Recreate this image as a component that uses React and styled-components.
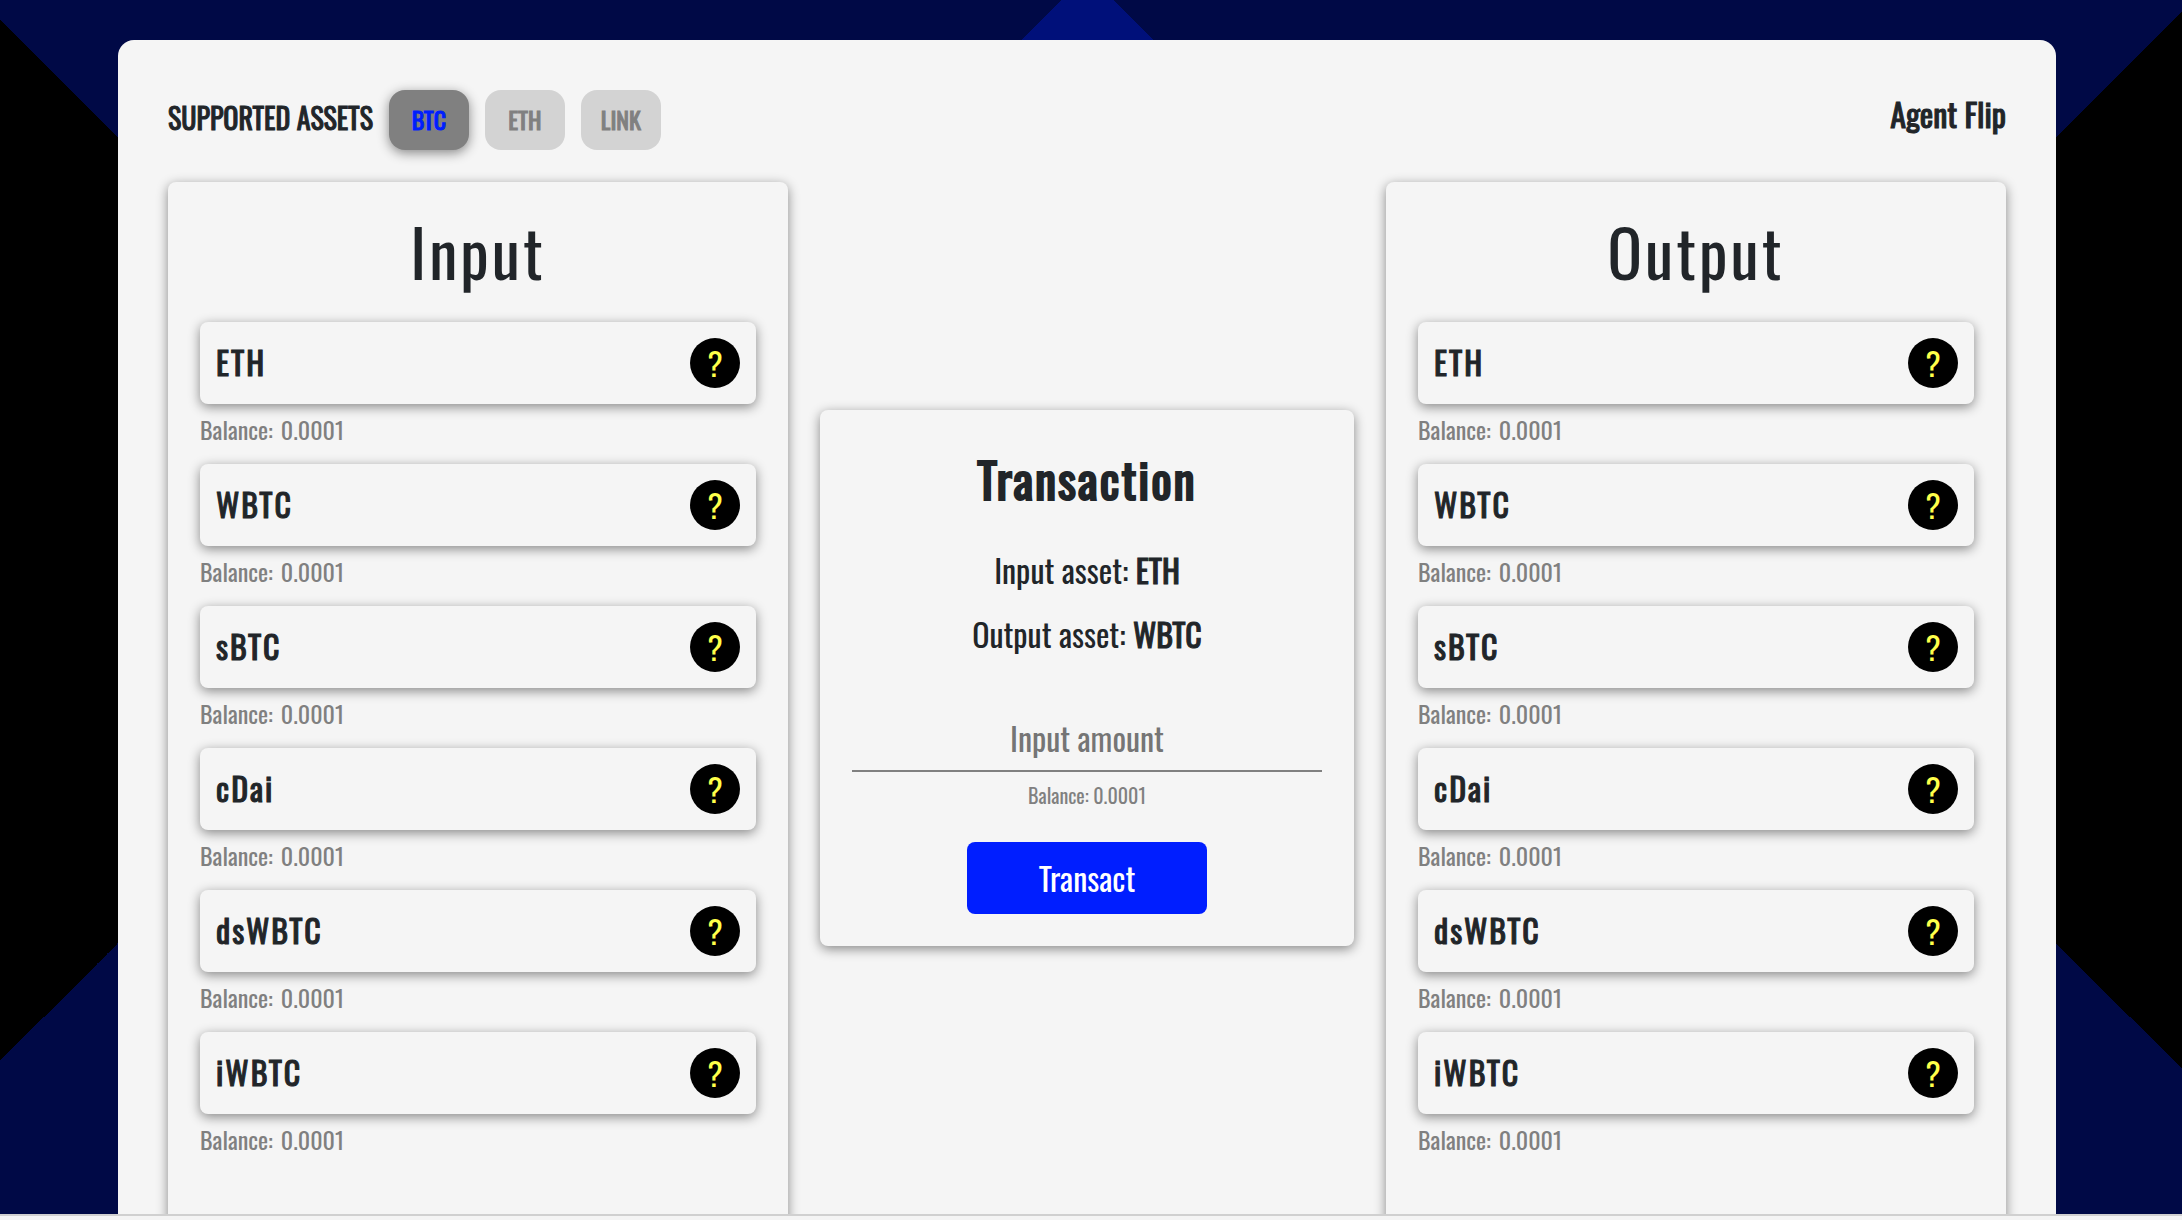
import React, { useState } from "react";
import styled, { createGlobalStyle, css } from "styled-components";

const GlobalStyle = createGlobalStyle`
  *, *::before, *::after { box-sizing: border-box; }
  body {
    margin: 0;
    font-family: Oswald, "Roboto Condensed", sans-serif;
    font-size: 32px;
    line-height: 48px;
    color: #212529;
    background: #f4f4f4;
    font-synthesis: none;
  }
  h1, h2, h3, p, ul { margin: 0; padding: 0; font-weight: 400; }
  button, input { font: inherit; }
`;

const heavy = css`
  font-weight: 400;
  -webkit-text-stroke: 1px currentColor;
`;

const raised = css`
  background: #f5f5f5;
  border-radius: 8px;
  box-shadow: 0 3px 12px rgba(0, 0, 0, 0.45);
`;

const Page = styled.div`
  display: flex;
  flex-direction: column;
  height: 100vh;
`;

const Backdrop = styled.main`
  flex: 1;
  min-height: 0;
  overflow: hidden;
  display: flex;
  padding: 40px 126px 0 118px;
  background:
    conic-gradient(from 225deg at calc(50% - 570px) 540px, #000 90deg, transparent 0),
    conic-gradient(from 45deg at calc(50% + 562px) 540px, #000 90deg, transparent 0),
    conic-gradient(from 135deg at calc(50% - 4px) -26px, #00107a 90deg, transparent 0) 0 0 / 100% 540px no-repeat,
    #000946;
`;

const Footer = styled.footer`
  height: 6px;
  border-top: 2px solid #d0d0d0;
  background: #f4f4f4;
`;

const Sheet = styled.section`
  flex: 1;
  display: flex;
  flex-direction: column;
  gap: 32px;
  height: max-content;
  min-height: 100%;
  padding: 50px 50px 0;
  background: #f5f5f5;
  border-radius: 16px 16px 0 0;
`;

const Header = styled.header`
  display: flex;
  justify-content: space-between;
  align-items: flex-start;
`;

const AssetFilter = styled.div`
  display: flex;
  align-items: baseline;
  gap: 16px;
`;

const FilterLabel = styled.h3`
  ${heavy}
  font-size: 28px;
`;

const Brand = styled.h1`
  ${heavy}
  font-size: 32px;
`;

const Chip = styled.button`
  ${heavy}
  width: 80px;
  height: 60px;
  padding: 0 0 2px;
  border: 0;
  border-radius: 16px;
  font-size: 24px;
  line-height: 36px;
  cursor: pointer;
  color: ${(p) => (p.$active ? "#001eff" : "#808080")};
  background: ${(p) => (p.$active ? "#808080" : "#d3d3d3")};
  box-shadow: ${(p) => (p.$active ? "0 3px 12px rgba(0, 0, 0, 0.45)" : "none")};
`;

const Columns = styled.div`
  flex: 1;
  display: grid;
  grid-template-columns: 620fr 534fr 620fr;
  gap: 32px;
`;

const Card = styled.section`
  ${raised}
  border-radius: 8px 8px 0 0;
  padding: 32px 32px 80px;
`;

const CardTitle = styled.h2`
  margin-bottom: 34px;
  font-size: 64px;
  line-height: 74px;
  letter-spacing: 3px;
  text-align: center;
`;

const TokenList = styled.ul`
  display: flex;
  flex-direction: column;
  gap: 18px;
  list-style: none;
`;

const Token = styled.li`
  display: flex;
  flex-direction: column;
  gap: 8px;
`;

const TokenRow = styled.div`
  ${raised}
  display: flex;
  justify-content: space-between;
  align-items: flex-start;
  padding: 16px;
`;

const TokenName = styled.span`
  ${heavy}
  letter-spacing: 2px;
`;

const Help = styled.button`
  width: 50px;
  height: 50px;
  padding: 0;
  border: 0;
  border-radius: 50%;
  line-height: 48px;
  color: #ffff4a;
  background: #000;
  cursor: pointer;
`;

const Balance = styled.p`
  display: flex;
  gap: 8px;
  font-size: 24px;
  line-height: 34px;
  color: #808080;
`;

const TransactionCard = styled.form`
  ${raised}
  align-self: start;
  display: flex;
  flex-direction: column;
  align-items: center;
  margin-top: 228px;
  padding: 32px;
`;

const TransactionTitle = styled.h2`
  ${heavy}
  -webkit-text-stroke-width: 2px;
  margin-bottom: 30px;
  font-size: 48px;
  line-height: 74px;
  letter-spacing: 2px;
`;

const Choice = styled.p`
  margin-bottom: 16px;
  b { ${heavy} }
`;

const Amount = styled.input`
  width: 100%;
  margin: 40px 0 8px;
  padding: 0 0 10px;
  border: 0;
  border-bottom: 2px solid #808080;
  border-radius: 0;
  background: none;
  line-height: 46px;
  height: 58px;
  text-align: center;
  color: #212529;
  outline: none;
  &::placeholder { color: #757575; opacity: 1; }
`;

const SmallBalance = styled.p`
  font-size: 20px;
  line-height: 30px;
  color: #808080;
`;

const Submit = styled.button`
  width: 240px;
  height: 72px;
  margin-top: 32px;
  padding: 0;
  border: 0;
  border-radius: 8px;
  color: #fff;
  background: #001eff;
  cursor: pointer;
`;

const FILTERS = ["BTC", "ETH", "LINK"];
const TOKENS = ["ETH", "WBTC", "sBTC", "cDai", "dsWBTC", "iWBTC"];
const BALANCE = "0.0001";

function TokenCard({ title }) {
  return (
    <Card>
      <CardTitle>{title}</CardTitle>
      <TokenList>
        {TOKENS.map((name) => (
          <Token key={name}>
            <TokenRow>
              <TokenName>{name}</TokenName>
              <Help type="button">?</Help>
            </TokenRow>
            <Balance>
              <span>Balance:</span>
              <span>{BALANCE}</span>
            </Balance>
          </Token>
        ))}
      </TokenList>
    </Card>
  );
}

export default function App() {
  const [filter, setFilter] = useState("BTC");
  const [amount, setAmount] = useState("");

  return (
    <Page>
      <GlobalStyle />
      <Backdrop>
        <Sheet>
          <Header>
            <AssetFilter>
              <FilterLabel>SUPPORTED ASSETS</FilterLabel>
              {FILTERS.map((name) => (
                <Chip
                  key={name}
                  type="button"
                  $active={name === filter}
                  aria-pressed={name === filter}
                  onClick={() => setFilter(name)}
                >
                  {name}
                </Chip>
              ))}
            </AssetFilter>
            <Brand>Agent Flip</Brand>
          </Header>
          <Columns>
            <TokenCard title="Input" />
            <TransactionCard onSubmit={(e) => e.preventDefault()}>
              <TransactionTitle>Transaction</TransactionTitle>
              <Choice>Input asset: <b>ETH</b></Choice>
              <Choice>Output asset: <b>WBTC</b></Choice>
              <Amount
                aria-label="Input amount"
                placeholder="Input amount"
                value={amount}
                onChange={(e) => setAmount(e.target.value)}
              />
              <SmallBalance>Balance: {BALANCE}</SmallBalance>
              <Submit type="submit">Transact</Submit>
            </TransactionCard>
            <TokenCard title="Output" />
          </Columns>
        </Sheet>
      </Backdrop>
      <Footer />
    </Page>
  );
}
